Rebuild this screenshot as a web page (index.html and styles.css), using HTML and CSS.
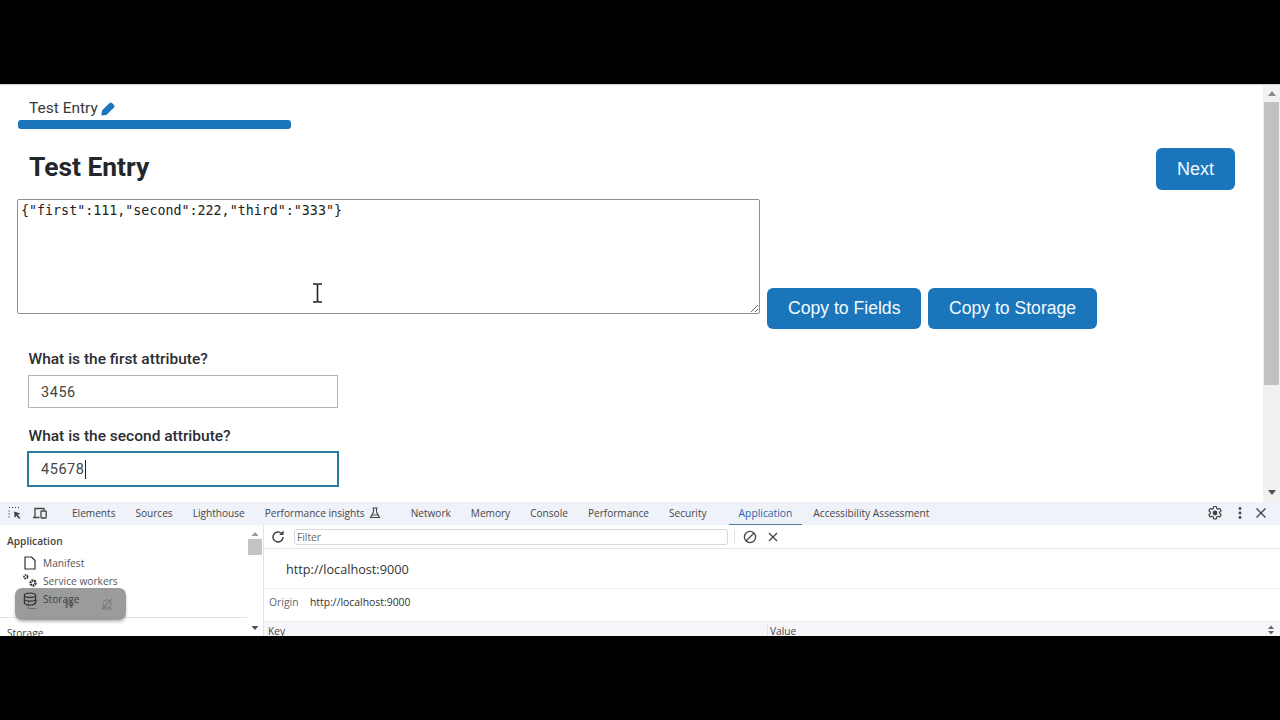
FILE: index.html
```html
<!DOCTYPE html>
<html lang="en">
<head>
<meta charset="utf-8">
<title>Test Entry</title>
<link rel="stylesheet" href="styles.css">
</head>
<body>
<div class="screen">
  <div class="page">
    <main class="content">
      <div class="tab-title"><span>Test Entry</span>
        <svg class="pencil" viewBox="0 0 14 14" width="14" height="14"><path d="M0.4 13.6 L1 8.6 L8.6 1 Q9.8 0 11 1 L13 3 Q14 4.2 13 5.4 L5.4 13 Z" fill="#1b75bb"/></svg>
      </div>
      <div class="progress"></div>
      <div class="head-row">
        <h1>Test Entry</h1>
        <button class="btn btn-next">Next</button>
      </div>
      <div class="json-row">
        <textarea class="json" spellcheck="false">{"first":111,"second":222,"third":"333"}</textarea>
        <button class="btn btn-copy">Copy to Fields</button>
        <button class="btn btn-copy">Copy to Storage</button>
      </div>
      <div class="field">
        <label>What is the first attribute?</label>
        <div class="input">3456</div>
      </div>
      <div class="field">
        <label>What is the second attribute?</label>
        <div class="input focus">45678<i class="caret"></i></div>
      </div>
      <svg class="ibeam" viewBox="0 0 11 20" width="11" height="20"><path d="M1 1 H4.5 Q5.5 1 5.5 2.5 V17.5 Q5.5 19 4.5 19 H1 M10 1 H6.5 Q5.5 1 5.5 2.5 M5.5 17.5 Q5.5 19 6.5 19 H10" fill="none" stroke="#222" stroke-width="1.6"/></svg>
    </main>
    <div class="scrollbar">
      <svg class="arrow" viewBox="0 0 10 6" width="10" height="6"><path d="M1 6 L5 1 L9 6 Z" fill="#8a8a8a"/></svg>
      <div class="thumb"></div>
      <svg class="arrow arrow-down" viewBox="0 0 10 6" width="10" height="6"><path d="M1 0 L5 5 L9 0 Z" fill="#505050"/></svg>
    </div>
  </div>
  <section class="devtools">
    <div class="dt-tabs">
      <svg class="dt-icon first" viewBox="0 0 16 16" width="16" height="16"><path d="M2 2.5h1M5 2.5h1M8 2.5h1M11 2.5h1M2 5.5v1M2 8.5v1M2 11.5v1" stroke="#444" stroke-width="1.2" fill="none"/><path d="M7 6.5 L13.5 8.6 L10.7 9.8 L13.4 13 L12 14 L9.5 10.8 L7.6 13 Z" fill="#444"/></svg>
      <svg class="dt-icon second" viewBox="0 0 16 16" width="16" height="16"><path d="M3 12.5V3.5h9v1.5M1 12.5h6.5" fill="none" stroke="#444" stroke-width="1.3"/><rect x="9" y="6" width="5.2" height="7" rx=".8" fill="none" stroke="#444" stroke-width="1.3"/></svg>
      <span class="tab">Elements</span>
      <span class="tab">Sources</span>
      <span class="tab">Lighthouse</span>
      <span class="tab">Performance insights
        <svg class="flask" viewBox="0 0 12 12" width="12" height="12"><path d="M3.5 1h5M4.5 1v4L1.5 10.5h9L7.5 5V1M3 8h6" fill="none" stroke="#444" stroke-width="1.1"/></svg>
      </span>
      <span class="tab">Network</span>
      <span class="tab">Memory</span>
      <span class="tab">Console</span>
      <span class="tab">Performance</span>
      <span class="tab">Security</span>
      <span class="tab active">Application</span>
      <span class="tab">Accessibility Assessment</span>
      <span class="dt-spacer"></span>
      <svg class="dt-tool" viewBox="0 0 16 16" width="16" height="16"><path d="M6.7 1.5h2.6l.4 1.9 1.3.7 1.8-.6 1.3 2.2-1.4 1.3v1.4l1.4 1.3-1.3 2.2-1.8-.6-1.3.7-.4 1.9H6.7l-.4-1.9-1.3-.7-1.8.6-1.3-2.2 1.4-1.3V7L1.9 5.7l1.3-2.2 1.8.6 1.3-.7z" fill="none" stroke="#444" stroke-width="1.2" stroke-linejoin="round"/><circle cx="8" cy="8" r="2.4" fill="#444"/></svg>
      <svg class="dt-tool dots" viewBox="0 0 16 16" width="16" height="16"><circle cx="8" cy="3.5" r="1.4" fill="#444"/><circle cx="8" cy="8" r="1.4" fill="#444"/><circle cx="8" cy="12.5" r="1.4" fill="#444"/></svg>
      <svg class="dt-tool close" viewBox="0 0 16 16" width="16" height="16"><path d="M3.5 3.5 L12.5 12.5 M12.5 3.5 L3.5 12.5" stroke="#444" stroke-width="1.4" fill="none"/></svg>
    </div>
    <div class="dt-body">
      <aside class="dt-side">
        <div class="side-list">
          <div class="side-title">Application</div>
          <div class="side-item">
            <svg class="side-icon" viewBox="0 0 14 14" width="14" height="14"><path d="M2 1h6.5L12 4.5V13H2z" fill="none" stroke="#333" stroke-width="1.2" stroke-linejoin="round"/></svg>Manifest</div>
          <div class="side-item">
            <svg class="side-icon gears" viewBox="0 0 16 16" width="16" height="16"><circle cx="3.8" cy="3.8" r="1.8" fill="none" stroke="#333" stroke-width="1.7" stroke-dasharray="1.6 .6"/><circle cx="11" cy="10" r="2.5" fill="none" stroke="#333" stroke-width="2.4" stroke-dasharray="1.8 .7"/></svg>Service workers</div>
          <div class="side-item over">
            <svg class="side-icon" viewBox="0 0 14 14" width="14" height="14"><ellipse cx="7" cy="3.2" rx="5.6" ry="2.2" fill="none" stroke="#333" stroke-width="1.2"/><path d="M1.4 3.2v7.6c0 1.2 2.5 2.2 5.6 2.2s5.6-1 5.6-2.2V3.2M1.4 7c0 1.2 2.5 2.2 5.6 2.2s5.6-1 5.6-2.2" fill="none" stroke="#333" stroke-width="1.2"/></svg>Storage</div>
          <div class="side-sep"></div>
          <div class="side-title small">Storage</div>
        </div>
        <div class="side-scroll">
          <svg viewBox="0 0 8 5" width="8" height="5"><path d="M0.5 5 L4 1 L7.5 5 Z" fill="#9a9a9a"/></svg>
          <div class="side-thumb"></div>
          <svg class="side-down" viewBox="0 0 8 5" width="8" height="5"><path d="M0.5 0 L4 4 L7.5 0 Z" fill="#505050"/></svg>
        </div>
      </aside>
      <div class="dt-main">
        <div class="filter-bar">
          <svg class="reload" viewBox="0 0 16 16" width="16" height="16"><path d="M13 8a5 5 0 1 1-1.6-3.7" fill="none" stroke="#444" stroke-width="1.5"/><path d="M13.6 1.5v4.4H9.2z" fill="#444"/></svg>
          <div class="filter">Filter</div>
          <span class="bar-sep"></span>
          <svg class="clear" viewBox="0 0 14 14" width="14" height="14"><circle cx="7" cy="7" r="5.6" fill="none" stroke="#444" stroke-width="1.3"/><path d="M3 11 L11 3" stroke="#444" stroke-width="1.3"/></svg>
          <svg class="clear x" viewBox="0 0 12 12" width="12" height="12"><path d="M2 2 L10 10 M10 2 L2 10" stroke="#444" stroke-width="1.3"/></svg>
        </div>
        <div class="origin-title">http://localhost:9000</div>
        <div class="origin-row"><span class="o-label">Origin</span><span class="o-value">http://localhost:9000</span></div>
        <div class="table-head">
          <span class="col col-key">Key</span>
          <span class="col col-value">Value</span>
          <svg class="sort" viewBox="0 0 8 10" width="8" height="10"><path d="M1 4 L4 .5 L7 4 Z M1 6 L4 9.5 L7 6 Z" fill="#666"/></svg>
        </div>
      </div>
    </div>
    <div class="float-bar">
      <svg viewBox="0 0 12 12" width="12" height="12"><path d="M1.5 2.5v8h8M10.5 2 L5 7.5" fill="none" stroke="#707070" stroke-width="1.1"/></svg>
      <svg viewBox="0 0 12 12" width="12" height="12"><rect x="2.5" y="2" width="2.4" height="8" fill="#6c6c6c"/><rect x="7" y="2" width="2.4" height="8" fill="#6c6c6c"/></svg>
      <svg viewBox="0 0 14 14" width="14" height="14"><circle cx="7" cy="7" r="4" fill="none" stroke="#7a7a7a" stroke-width="1.1"/><path d="M2 12 L12 2M2 12h10" stroke="#7a7a7a" stroke-width="1.1"/></svg>
    </div>
  </section>
</div>
</body>
</html>
```
FILE: styles.css
```css
* { box-sizing: border-box; }
html, body { margin: 0; height: 100%; background: #000; overflow: hidden; }
.screen { width: 1280px; height: 720px; padding: 84px 0; display: flex; flex-direction: column; }

.page { height: 418px; display: flex; background: #fff; overflow: hidden; border-top: 1px solid #d2d2d2; }
.content { position: relative; flex: 1; padding: 0 28px 0 18px; font-family: Roboto, sans-serif; color: #212529; }
.tab-title { display: flex; align-items: center; gap: 3px; height: 35px; padding: 10px 0 0 11px; font-size: 15.5px; color: #3a3a3a; }
.pencil { margin-top: 2px; }
.progress { width: 273px; height: 9px; border-radius: 3px; background: #1b75bb; }
.head-row { display: flex; justify-content: space-between; align-items: flex-start; padding-left: 11px; margin-top: 18px; }
h1 { margin: 0; font-size: 26.4px; font-weight: 700; line-height: 41px; color: #23272b; }
.btn { border: 0; background: #1b75bb; color: #f4fbff; font-family: "Liberation Sans", Arial, sans-serif; font-size: 17.6px; border-radius: 6px; }
.btn-next { width: 79px; height: 42px; margin-top: 1px; font-size: 18px; }
.json-row { display: flex; align-items: flex-end; gap: 7px; margin: 9px 0 0 -1px; }
.json { width: 743px; height: 115px; margin: 0 0 -1px; padding: 3px; border: 1px solid #8f8f8f; border-radius: 2px; font-family: "DejaVu Sans Mono", monospace; font-size: 13.33px; line-height: 15px; color: #222; resize: both; outline: 0; }
.btn-copy { height: 41px; padding: 0 21px; margin-bottom: -16px; }
.btn-copy:last-child { padding: 0 20.5px; }
.field { padding-left: 10px; }
.json-row + .field { margin-top: 36px; }
.field + .field { margin-top: 18px; }
label { display: block; padding: 1px 0 0 .5px; font-size: 15.5px; font-weight: 500; line-height: 18px; color: #2a2e33; }
.input { width: 310px; height: 33px; margin-top: 7px; padding-left: 12px; border: 1px solid #b4b4b4; font-family: Roboto, sans-serif; font-size: 14.5px; line-height: 33px; letter-spacing: .55px; color: #444; }
.input.focus { width: 312px; height: 36px; margin-left: -1px; margin-top: 6px; padding-left: 12px; border: 2px solid #2a7d9c; line-height: 33px; }
.caret { display: inline-block; width: 1px; height: 19px; background: #222; vertical-align: -5px; }
.ibeam { position: absolute; left: 312px; top: 198px; }

.scrollbar { width: 17px; background: #f1f1f1; display: flex; flex-direction: column; align-items: center; padding-top: 5px; }
.arrow { flex: none; }
.thumb { width: 15px; height: 283px; margin-top: 6px; background: #c1c1c1; }
.arrow-down { margin-top: auto; margin-bottom: 6px; }

.devtools { position: relative; height: 134px; display: flex; flex-direction: column; background: #fff; overflow: hidden; font-family: "Open Sans", sans-serif; color: #474747; }
.dt-tabs { height: 23px; flex: none; display: flex; align-items: center; background: #eff2f8; font-size: 10.1px; padding-bottom: 1px; }
.dt-icon { flex: none; }
.dt-icon.first { margin-left: 7px; }
.dt-icon.second { margin-left: 9px; margin-right: 14px; }
.tab { display: flex; align-items: center; gap: 3px; height: 23px; padding: 0 10px; white-space: nowrap; }
.tab.active { margin-left: 12px; padding: 0 10px; font-size: 10.3px; color: #2d63a8; border-bottom: 1.5px solid #4d7d9c; }
.tab.active + .tab { font-size: 10.2px; margin-left: 1px; }
.flask { margin-left: 1px; margin-right: 10px; }
.dt-spacer { flex: 1; }
.dt-tool { margin-right: 9px; }
.dt-tool.dots { margin-right: 5px; }
.dt-tool.close { margin-right: 11px; }
.dt-body { flex: 1; display: flex; min-height: 0; }
.dt-side { width: 264px; flex: none; display: flex; border-right: 1px solid #dfe3e8; }
.side-list { flex: 1; padding: 9px 0 0 7px; font-size: 10.2px; }
.side-title { font-weight: 600; font-size: 10.2px; line-height: 14px; margin-bottom: 6px; color: #444; }
.side-title.small { font-weight: 500; margin-top: 8px; }
.side-item { display: flex; align-items: center; height: 18px; padding-left: 16px; gap: 6px; color: #555; }
.side-item.over { position: relative; z-index: 2; color: #404040; }
.side-icon { flex: none; width: 14px; }
.side-icon.gears { width: 16px; margin-left: -1px; margin-right: -1px; }
.side-sep { height: 1px; background: #dfe3e8; margin: 9px 0 0 -7px; }
.side-scroll { width: 16px; flex: none; display: flex; flex-direction: column; align-items: center; padding-top: 6px; }
.side-thumb { width: 14px; height: 16px; margin-top: 3px; background: #c4c4c4; }
.side-down { margin-top: auto; margin-bottom: 5px; }
.dt-main { flex: 1; min-width: 0; display: flex; flex-direction: column; }
.filter-bar { height: 24px; flex: none; display: flex; align-items: center; border-bottom: 1px solid #e2e8ee; padding-left: 6px; }
.filter { width: 434px; height: 16px; margin-left: 8px; padding-left: 2px; border: 1px solid #d8d8d8; border-radius: 3px; font-size: 10.2px; line-height: 14px; color: #666; }
.bar-sep { width: 1px; height: 14px; margin-left: 6px; background: #dde2e8; }
.clear { margin-left: 8px; flex: none; }
.clear.x { margin-left: 10px; }
.origin-title { height: 40px; flex: none; padding-left: 22px; font-size: 12.7px; line-height: 40px; border-bottom: 1px solid #eceff2; color: #333; }
.origin-row { height: 33px; flex: none; display: flex; align-items: center; padding: 0 0 7px 5px; font-size: 10.4px; border-bottom: 1px solid #e8ecef; }
.o-label { width: 41px; color: #666; }
.o-value { color: #333; }
.table-head { flex: 1; position: relative; display: flex; background: #f4f6fa; font-size: 10.2px; padding: 2px 0 0 4px; }
.col-key { width: 499px; }
.col-value { padding-left: 2px; border-left: 1px solid #dfe3e8; }
.sort { position: absolute; right: 5px; top: 3px; }
.float-bar { position: absolute; left: 15px; top: 86px; z-index: 1; width: 111px; height: 32px; display: flex; align-items: center; justify-content: space-around; border-radius: 7px; background: rgba(130, 130, 130, .8); box-shadow: 0 2px 3px rgba(0, 0, 0, .25); }
```
